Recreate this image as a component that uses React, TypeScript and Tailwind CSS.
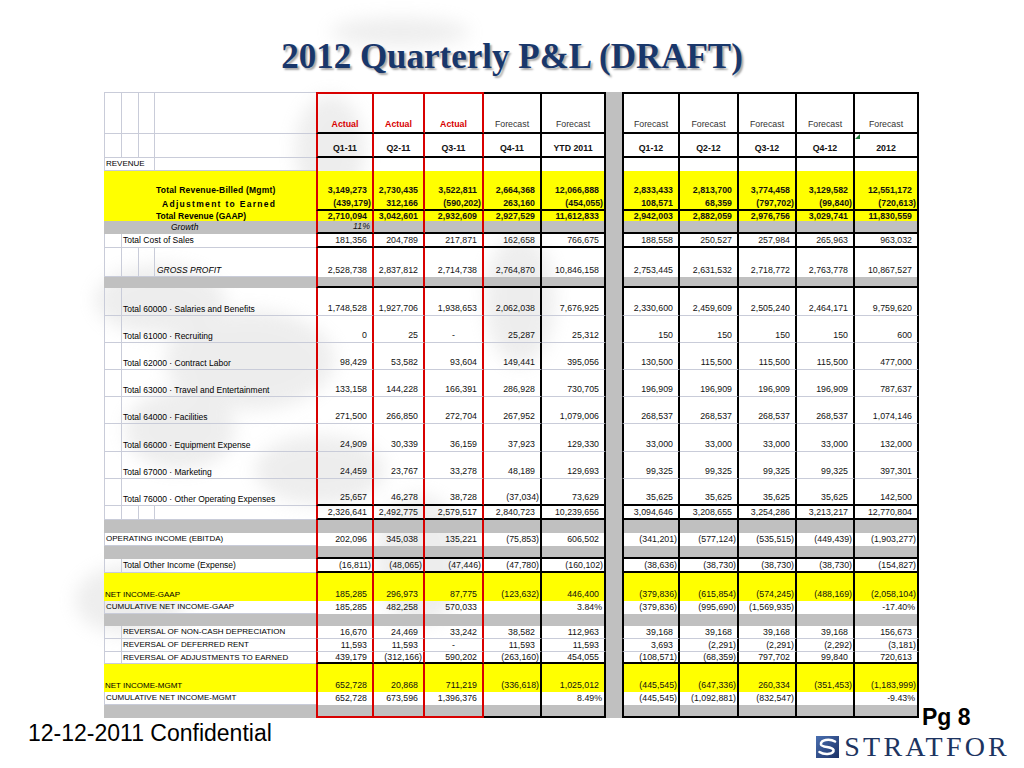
import React from "react";

const GRID =
  "grid grid-cols-[17px_17px_16px_162px_58px_51px_59px_58px_64px_16px_58px_59px_58px_58px_64px]";

const SPAN: Record<number, string> = {
  1: "col-span-1",
  2: "col-span-2",
  3: "col-span-3",
  4: "col-span-4",
};

type Seg = { span: 1 | 2 | 3 | 4; text?: string; cls?: string };

type Row = {
  h: string;
  bg?: "yellow" | "gray";
  segs: Seg[];
  vals?: string;
  head?: 1 | 2;
  lines?: boolean; // light grid in the label columns
  lb?: boolean; // light rule under the whole row
  nb?: boolean; // black rule under the figures
  tall?: boolean;
  bold?: boolean;
  italic?: boolean;
  last?: boolean;
};

const blank: Seg[] = [{ span: 1 }, { span: 1 }, { span: 1 }, { span: 1 }];
const ind = (text: string): Seg[] => [{ span: 1 }, { span: 3, text, cls: "pl-[1px]" }];
const left = (text: string, cls = "text-[8px]"): Seg[] => [{ span: 4, text, cls: `pl-[1px] ${cls}` }];

const rows: Row[] = [
  { h: "h-[42px]", head: 1, segs: blank, lines: true, vals: "Actual Actual Actual Forecast Forecast Forecast Forecast Forecast Forecast Forecast" },
  { h: "h-[24px]", head: 2, segs: blank, lines: true, vals: "Q1-11 Q2-11 Q3-11 Q4-11 YTD_2011 Q1-12 Q2-12 Q3-12 Q4-12 2012" },
  { h: "h-[13px]", segs: [{ span: 3, text: "REVENUE", cls: "pl-[1px] text-[8px]" }, { span: 1 }], lines: true },
  { h: "h-[12px]", bg: "yellow", segs: [{ span: 4 }] },
  {
    h: "h-[14px]", bg: "yellow", bold: true,
    segs: [{ span: 3 }, { span: 1, text: "Total Revenue-Billed (Mgmt)", cls: "pl-[2px] tracking-[0.2px]" }],
    vals: "3,149,273 2,730,435 3,522,811 2,664,368 12,066,888 2,833,433 2,813,700 3,774,458 3,129,582 12,551,172",
  },
  {
    h: "h-[14px]", bg: "yellow", bold: true, nb: true,
    segs: [{ span: 3 }, { span: 1, text: "Adjustment to Earned", cls: "pl-[8px] tracking-[1.3px]" }],
    vals: "(439,179) 312,166 (590,202) 263,160 (454,055) 108,571 68,359 (797,702) (99,840) (720,613)",
  },
  {
    h: "h-[10px]", bg: "yellow", bold: true,
    segs: [{ span: 3 }, { span: 1, text: "Total Revenue (GAAP)", cls: "pl-[2px]" }],
    vals: "2,710,094 3,042,601 2,932,609 2,927,529 11,612,833 2,942,003 2,882,059 2,976,756 3,029,741 11,830,559",
  },
  {
    h: "h-[13px]", bg: "gray", italic: true, nb: true,
    segs: [{ span: 3 }, { span: 1, text: "Growth", cls: "pl-[17px]" }],
    vals: "11% _ _ _ _ _ _ _ _ _",
  },
  {
    h: "h-[14px]", lines: true, nb: true, segs: ind("Total Cost of Sales"),
    vals: "181,356 204,789 217,871 162,658 766,675 188,558 250,527 257,984 265,963 963,032",
  },
  {
    h: "h-[29px]", lines: true, tall: true,
    segs: [{ span: 1 }, { span: 1 }, { span: 1 }, { span: 1, text: "GROSS PROFIT", cls: "pl-[2px] italic" }],
    vals: "2,528,738 2,837,812 2,714,738 2,764,870 10,846,158 2,753,445 2,631,532 2,718,772 2,763,778 10,867,527",
  },
  { h: "h-[11px]", bg: "gray", nb: true, segs: [{ span: 4 }] },
  {
    h: "h-[28px]", lines: true, tall: true, lb: true, segs: ind("Total 60000 · Salaries and Benefits"),
    vals: "1,748,528 1,927,706 1,938,653 2,062,038 7,676,925 2,330,600 2,459,609 2,505,240 2,464,171 9,759,620",
  },
  {
    h: "h-[27px]", lines: true, tall: true, lb: true, segs: ind("Total 61000 · Recruiting"),
    vals: "0 25 - 25,287 25,312 150 150 150 150 600",
  },
  {
    h: "h-[27px]", lines: true, tall: true, lb: true, segs: ind("Total 62000 · Contract Labor"),
    vals: "98,429 53,582 93,604 149,441 395,056 130,500 115,500 115,500 115,500 477,000",
  },
  {
    h: "h-[27px]", lines: true, tall: true, lb: true, segs: ind("Total 63000 · Travel and Entertainment"),
    vals: "133,158 144,228 166,391 286,928 730,705 196,909 196,909 196,909 196,909 787,637",
  },
  {
    h: "h-[27px]", lines: true, tall: true, lb: true, segs: ind("Total 64000 · Facilities"),
    vals: "271,500 266,850 272,704 267,952 1,079,006 268,537 268,537 268,537 268,537 1,074,146",
  },
  {
    h: "h-[28px]", lines: true, tall: true, lb: true, segs: ind("Total 66000 · Equipment Expense"),
    vals: "24,909 30,339 36,159 37,923 129,330 33,000 33,000 33,000 33,000 132,000",
  },
  {
    h: "h-[27px]", lines: true, tall: true, lb: true, segs: ind("Total 67000 · Marketing"),
    vals: "24,459 23,767 33,278 48,189 129,693 99,325 99,325 99,325 99,325 397,301",
  },
  {
    h: "h-[27px]", lines: true, tall: true, nb: true, segs: ind("Total 76000 · Other Operating Expenses"),
    vals: "25,657 46,278 38,728 (37,034) 73,629 35,625 35,625 35,625 35,625 142,500",
  },
  {
    h: "h-[14px]", lines: true, nb: true, segs: blank,
    vals: "2,326,641 2,492,775 2,579,517 2,840,723 10,239,656 3,094,646 3,208,655 3,254,286 3,213,217 12,770,804",
  },
  { h: "h-[13px]", bg: "gray", segs: [{ span: 4 }] },
  {
    h: "h-[13px]", lines: true, segs: left("OPERATING INCOME (EBITDA)"),
    vals: "202,096 345,038 135,221 (75,853) 606,502 (341,201) (577,124) (535,515) (449,439) (1,903,277)",
  },
  { h: "h-[13px]", bg: "gray", nb: true, segs: [{ span: 4 }] },
  {
    h: "h-[14px]", lines: true, nb: true, segs: ind("Total Other Income (Expense)"),
    vals: "(16,811) (48,065) (47,446) (47,780) (160,102) (38,636) (38,730) (38,730) (38,730) (154,827)",
  },
  {
    h: "h-[28px]", bg: "yellow", tall: true, segs: left("NET INCOME-GAAP"),
    vals: "185,285 296,973 87,775 (123,632) 446,400 (379,836) (615,854) (574,245) (488,169) (2,058,104)",
  },
  {
    h: "h-[13px]", lines: true, segs: left("CUMULATIVE NET INCOME-GAAP"),
    vals: "185,285 482,258 570,033 _ 3.84% (379,836) (995,690) (1,569,935) _ -17.40%",
  },
  { h: "h-[12px]", bg: "gray", segs: [{ span: 4 }] },
  {
    h: "h-[13px]", lines: true, lb: true, segs: [{ span: 1 }, { span: 3, text: "REVERSAL OF NON-CASH DEPRECIATION", cls: "pl-[1px] text-[8px]" }],
    vals: "16,670 24,469 33,242 38,582 112,963 39,168 39,168 39,168 39,168 156,673",
  },
  {
    h: "h-[13px]", lines: true, lb: true, segs: [{ span: 1 }, { span: 3, text: "REVERSAL OF DEFERRED RENT", cls: "pl-[1px] text-[8px]" }],
    vals: "11,593 11,593 - 11,593 11,593 3,693 (2,291) (2,291) (2,292) (3,181)",
  },
  {
    h: "h-[12px]", lines: true, nb: true, segs: [{ span: 1 }, { span: 3, text: "REVERSAL OF ADJUSTMENTS TO EARNED", cls: "pl-[1px] text-[8px]" }],
    vals: "439,179 (312,166) 590,202 (263,160) 454,055 (108,571) (68,359) 797,702 99,840 720,613",
  },
  {
    h: "h-[28px]", bg: "yellow", tall: true, segs: left("NET INCOME-MGMT"),
    vals: "652,728 20,868 711,219 (336,618) 1,025,012 (445,545) (647,336) 260,334 (351,453) (1,183,999)",
  },
  {
    h: "h-[13px]", lines: true, segs: left("CUMULATIVE NET INCOME-MGMT"),
    vals: "652,728 673,596 1,396,376 _ 8.49% (445,545) (1,092,881) (832,547) _ -9.43%",
  },
  { h: "h-[13px]", bg: "gray", nb: true, last: true, segs: [{ span: 4 }] },
];

function figureCell(row: Row, i: number, raw: string) {
  const red = i < 3;
  const cls: string[] = ["flex whitespace-nowrap leading-none text-[8.8px] text-[#111]"];
  if (i === 0) cls.push("border-l-2 border-l-[#d80000]");
  if (i === 5) cls.push("border-l-2 border-l-black");
  cls.push(red ? "border-r-2 border-r-[#d80000]" : "border-r-2 border-r-black");
  if (row.head === 1) cls.push(red ? "border-t-2 border-t-[#d80000]" : "border-t-2 border-t-black");
  if (row.head) cls.push("border-b-2 border-b-black");
  else if (row.nb) cls.push(row.last && red ? "border-b-2 border-b-[#d80000]" : "border-b-2 border-b-black");
  else if (row.lb) cls.push("border-b border-b-[#c9ccd9]");

  const v = raw === "_" ? "" : raw.replace("_", " ");

  if (row.head === 1) {
    cls.push("items-end justify-center pb-[3px] text-[8.5px]");
    cls.push(v === "Actual" ? "font-bold text-[#d80000]" : "text-[#333]");
  } else if (row.head === 2) {
    cls.push("items-end justify-center pb-[3px] font-bold text-[8.8px] relative");
  } else {
    cls.push(row.tall ? "items-end pb-[2px]" : "items-center");
    if (v === "-") cls.push("justify-center");
    else if (v.endsWith(")")) cls.push("justify-end pr-[1px]");
    else if (v.endsWith("%")) cls.push("justify-end pr-[2px]");
    else cls.push("justify-end pr-[5px]");
    if (row.bold) cls.push("font-bold");
    if (row.italic) cls.push("italic");
  }

  return (
    <div key={`v${i}`} className={cls.join(" ")}>
      {v}
      {row.head === 2 && i === 9 && (
        <span className="absolute left-0 top-0 h-0 w-0 border-l-[5px] border-t-[5px] border-l-transparent border-t-[#1f7a3a] rotate-90" />
      )}
    </div>
  );
}

function SheetRow({ row }: { row: Row }) {
  const vals = row.vals ? row.vals.split(" ") : Array(10).fill("_");
  const bg = row.bg === "yellow" ? "bg-[#ffff00]" : row.bg === "gray" ? "bg-[#c0c0c0]" : "";
  const cells: React.ReactNode[] = [];

  row.segs.forEach((s, k) => {
    const cls = [
      SPAN[s.span],
      "flex whitespace-nowrap leading-none text-[8.5px] text-black",
      row.tall ? "items-end pb-[2px]" : "items-center",
    ];
    if (row.lines) cls.push("border-l border-l-[#c9ccd9] border-b border-b-[#c9ccd9]");
    else if (row.lb) cls.push("border-b border-b-[#c9ccd9]");
    if (row.head === 1) cls.push("border-t border-t-[#c9ccd9]");
    if (row.bold) cls.push("font-bold");
    if (row.italic) cls.push("italic");
    if (s.cls) cls.push(s.cls);
    cells.push(
      <div key={`s${k}`} className={cls.join(" ")}>
        {s.text}
      </div>,
    );
  });

  vals.forEach((v, i) => {
    if (i === 5) cells.push(<div key="sep" className="bg-[#c0c0c0]" />);
    cells.push(figureCell(row, i, v));
  });

  return <div className={`${GRID} ${row.h} ${bg}`}>{cells}</div>;
}

// faint world-map watermark behind the slide
function Watermark() {
  return (
    <svg className="pointer-events-none absolute inset-0" width="1024" height="768" viewBox="0 0 1024 768">
      <defs>
        <filter id="soft" x="-30%" y="-30%" width="160%" height="160%">
          <feGaussianBlur stdDeviation="9" />
        </filter>
      </defs>
      <g filter="url(#soft)" fill="#d2d2d2" opacity="0.38">
        <ellipse cx="400" cy="32" rx="70" ry="14" />
        <ellipse cx="330" cy="150" rx="35" ry="55" />
        <ellipse cx="160" cy="300" rx="65" ry="35" />
        <ellipse cx="250" cy="360" rx="85" ry="50" />
        <ellipse cx="180" cy="430" rx="55" ry="40" />
        <ellipse cx="320" cy="470" rx="65" ry="35" />
        <ellipse cx="420" cy="560" rx="45" ry="65" />
        <ellipse cx="520" cy="300" rx="35" ry="65" />
        <ellipse cx="130" cy="600" rx="55" ry="35" />
      </g>
    </svg>
  );
}

function StratforLogo() {
  return (
    <div className="flex items-center gap-[5px]">
      <svg width="23" height="22" viewBox="0 0 23 22">
        <defs>
          <linearGradient id="lg" x1="0" y1="0" x2="1" y2="1">
            <stop offset="0" stopColor="#4a6fb0" />
            <stop offset="1" stopColor="#1b3166" />
          </linearGradient>
        </defs>
        <rect width="23" height="22" fill="url(#lg)" />
        <path
          d="M19 5.5 C 14 2.5, 4 3.5, 5 8.5 C 6 12, 16 10, 17.5 14 C 18.5 18, 9 19.5, 3.5 16"
          fill="none"
          stroke="#ffffff"
          strokeWidth="2.6"
          strokeLinecap="round"
        />
      </svg>
      <span className="font-['Liberation_Serif',serif] text-[28px] leading-none tracking-[3.2px] text-[#1d3461]">
        STRATFOR
      </span>
    </div>
  );
}

export default function App() {
  return (
    <div className="relative h-[768px] w-[1024px] overflow-hidden bg-white font-['Liberation_Sans',Arial,sans-serif]">
      <Watermark />
      <div className="relative">
        <div className="flex h-[92px] items-start justify-center pt-[39px]">
          <h1 className="font-['Liberation_Serif','Times_New_Roman',serif] text-[35px] font-bold leading-none text-[#19376b] [text-shadow:2px_2px_2px_rgba(0,0,0,0.35)]">
            2012 Quarterly P&amp;L (DRAFT)
          </h1>
        </div>

        <div className="flex">
          <div className="ml-[104px] w-[815px]">
            {rows.map((r, i) => (
              <SheetRow key={i} row={r} />
            ))}
          </div>
          <div className="flex flex-col justify-end">
            <div className="-mb-[11px] ml-[3px] text-[23px] font-bold leading-none text-black">Pg 8</div>
          </div>
        </div>

        <div className="flex h-[50px]">
          <div className="pl-[28px] pt-[2px] text-[23px] leading-[26px] text-black">12-12-2011 Confidential</div>
          <div className="ml-auto pr-[14px] pt-[15px]">
            <StratforLogo />
          </div>
        </div>
      </div>
    </div>
  );
}
